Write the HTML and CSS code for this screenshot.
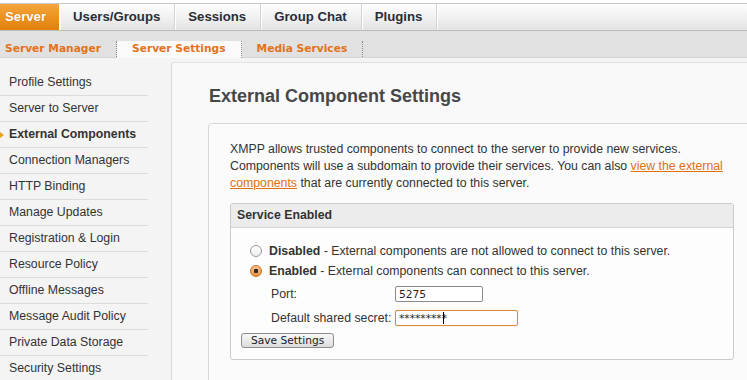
FILE: index.html
```html
<!DOCTYPE html>
<html lang="en">
  <head>
    <meta charset="UTF-8" />
    <title>External Component Settings</title>
    <link rel="stylesheet" href="styles.css">
  </head>
  <body>
    <header class="header">
      <ul class="tabs">
        <li class="tabs__item tabs__item--active"><a href="#">Server</a></li>
        <li class="tabs__item"><a href="#">Users/Groups</a></li>
        <li class="tabs__item"><a href="#">Sessions</a></li>
        <li class="tabs__item"><a href="#">Group Chat</a></li>
        <li class="tabs__item"><a href="#">Plugins</a></li>
      </ul>
      <ul class="subnav">
        <li class="subnav__item"><a href="#">Server Manager</a></li>
        <li class="subnav__item subnav__item--active"><a href="#">Server Settings</a></li>
        <li class="subnav__item"><a href="#">Media Services</a></li>
      </ul>
    </header>

    <div class="page">
      <aside class="sidebar">
        <ul class="sidebar__list">
          <li class="sidebar__item"><a href="#">Profile Settings</a></li>
          <li class="sidebar__item"><a href="#">Server to Server</a></li>
          <li class="sidebar__item sidebar__item--active"><a href="#">External Components</a></li>
          <li class="sidebar__item"><a href="#">Connection Managers</a></li>
          <li class="sidebar__item"><a href="#">HTTP Binding</a></li>
          <li class="sidebar__item"><a href="#">Manage Updates</a></li>
          <li class="sidebar__item"><a href="#">Registration &amp; Login</a></li>
          <li class="sidebar__item"><a href="#">Resource Policy</a></li>
          <li class="sidebar__item"><a href="#">Offline Messages</a></li>
          <li class="sidebar__item"><a href="#">Message Audit Policy</a></li>
          <li class="sidebar__item"><a href="#">Private Data Storage</a></li>
          <li class="sidebar__item"><a href="#">Security Settings</a></li>
        </ul>
      </aside>

      <main class="content">
        <h1 class="content__title">External Component Settings</h1>

        <div class="box">
          <p class="box__text">
            XMPP allows trusted components to connect to the server to provide new services.<br>
            Components will use a subdomain to provide their services. You can also
            <a class="link" href="#">view the external components</a> that are currently connected to this server.
          </p>

          <form class="panel">
            <div class="panel__head">Service Enabled</div>
            <div class="panel__body">
              <label class="option">
                <input class="radio" type="radio" name="enabled" value="false">
                <span><b>Disabled</b> - External components are not allowed to connect to this server.</span>
              </label>
              <label class="option">
                <input class="radio" type="radio" name="enabled" value="true" checked>
                <span><b>Enabled</b> - External components can connect to this server.</span>
              </label>

              <div class="fields">
                <span class="fields__label">Port:</span>
                <input class="field field--port" type="text" value="5275">
                <span class="fields__label">Default shared secret:</span>
                <span class="field-wrap">
                  <input class="field field--secret" type="text" value="*********">
                  <span class="field-wrap__caret"></span>
                </span>
              </div>

              <button class="btn" type="button">Save Settings</button>
            </div>
          </form>
        </div>
      </main>
    </div>
  </body>
</html>
```

FILE: styles.css
```css
* {
  box-sizing: border-box;
  margin: 0;
  padding: 0;
}
html,
body {
  overflow: hidden;
}
body {
  font-family: "Liberation Sans", Arial, sans-serif;
  font-size: 12.3px;
  color: #333;
  background: #f4f4f4;
}
a {
  color: inherit;
  text-decoration: none;
}
ul {
  list-style: none;
}

/* top tabs */
.header {
  padding-top: 3px;
  background: #fff;
}
.tabs {
  display: flex;
  height: 28px;
  border-top: 1px solid #c8c8c8;
  border-bottom: 1px solid #bcbcbc;
  background: linear-gradient(180deg, #fdfdfd 0%, #f1f1f1 50%, #e3e3e3 100%);
}
.tabs__item {
  border-right: 1px solid #d2d2d2;
  box-shadow: 1px 0 0 #fff;
}
.tabs__item a {
  display: block;
  padding: 0 14px 0 13px;
  font-size: 13.2px;
  font-weight: bold;
  line-height: 26px;
  color: #2a2d36;
}
.tabs__item--active {
  border-right-color: #fff;
  background: linear-gradient(180deg, #f4a540 0%, #ec931f 50%, #e0800f 100%);
}
.tabs__item--active a {
  padding: 0 13px 0 5px;
  color: #fff;
  text-shadow: 0 0 1px rgba(150, 70, 0, 0.5);
}

/* sub tabs */
.subnav {
  display: flex;
  align-items: flex-end;
  height: 27px;
  border-bottom: 1px solid #d4d4d4;
  background: #e1e1e1;
}
.subnav__item {
  height: 16px;
  border-right: 1px dotted #8c8c8c;
}
.subnav__item:first-child a {
  padding-left: 5px;
}
.subnav__item a {
  display: block;
  padding: 0 15px;
  font-family: "DejaVu Sans", Verdana, sans-serif;
  font-size: 8pt;
  font-weight: bold;
  line-height: 16px;
  color: #e3721a;
}
.subnav__item--active {
  height: 17px;
  margin-bottom: -1px;
  background: #fafafa;
}

/* layout */
.page {
  display: flex;
  align-items: flex-start;
}
.sidebar {
  flex: 0 0 171px;
  padding-top: 12px;
}
.sidebar__list {
  width: 148px;
}
.sidebar__item {
  position: relative;
  height: 26px;
  border-bottom: 1px solid #dcdcdc;
}
.sidebar__item a {
  display: block;
  padding-left: 9px;
  line-height: 25px;
}
.sidebar__item--active a {
  font-weight: bold;
}
.sidebar__item--active::before {
  content: "";
  position: absolute;
  left: 0;
  top: 10px;
  border-left: 4px solid #e9a31b;
  border-top: 3px solid transparent;
  border-bottom: 3px solid transparent;
}
.content {
  flex: 1;
  margin-top: 4px;
  padding: 22px 0 0 36px;
  min-height: 330px;
  border-top: 1px solid #e2e2e2;
  border-left: 1px solid #dadada;
  border-top-left-radius: 3px;
  background: #f9f9f9;
}
.content__title {
  margin-bottom: 16px;
  padding-left: 1px;
  font-size: 18px;
  line-height: 22px;
  color: #474747;
}

/* content box */
.box {
  margin-right: -10px;
  padding: 17px 22px 40px 21px;
  border: 1px solid #d8d8d8;
  border-radius: 4px;
  background: #fbfbfb;
}
.box__text {
  margin-bottom: 11px;
  line-height: 17px;
}
.link {
  color: #e0700f;
  text-decoration: underline;
}
.panel {
  border: 1px solid #cbcbcb;
  border-radius: 3px;
  background: #fdfdfd;
}
.panel__head {
  height: 24px;
  padding: 0 6px;
  border-bottom: 1px solid #d2d2d2;
  border-radius: 3px 3px 0 0;
  background: #ececec;
  font-weight: bold;
  line-height: 23px;
}
.panel__body {
  padding: 13px 10px 11px;
}
.option {
  display: flex;
  align-items: center;
  height: 20px;
  padding-left: 9px;
}
.radio {
  appearance: none;
  width: 12px;
  height: 12px;
  margin-right: 7px;
  border: 1px solid #9a9a9a;
  border-radius: 50%;
  background: linear-gradient(180deg, #fff, #ececec);
}
.radio:checked {
  border-color: #b8702e;
  background: radial-gradient(circle, #2a2a2a 0 2px, transparent 2.5px),
    linear-gradient(180deg, #fbc48a, #f0903a);
}
.fields {
  display: grid;
  grid-template-columns: 124px auto;
  grid-auto-rows: 24px;
  align-items: center;
  margin: 1px 0 0 30px;
}
.field {
  display: block;
  height: 16px;
  padding: 0 3px;
  border: 1px solid #8a8a8a;
  border-radius: 2px;
  background: #fff;
  font-family: "DejaVu Sans", Verdana, sans-serif;
  font-size: 8pt;
  color: #222;
  outline: none;
}
.field--port {
  width: 88px;
}
.field--secret {
  width: 123px;
  border-color: #d98a3c;
  box-shadow: 0 0 1px #f0b070;
}
.field-wrap {
  position: relative;
  justify-self: start;
}
.field-wrap__caret {
  position: absolute;
  left: 48px;
  top: 2px;
  width: 1px;
  height: 12px;
  background: #000;
}
.btn {
  display: block;
  height: 15px;
  margin-top: 3px;
  padding: 0 9px;
  border: 1px solid #8c8c8c;
  border-radius: 3px;
  background: linear-gradient(180deg, #f8f8f8, #dcdcdc);
  font-family: "DejaVu Sans", Verdana, sans-serif;
  font-size: 8pt;
  line-height: 13px;
  color: #222;
}
```
